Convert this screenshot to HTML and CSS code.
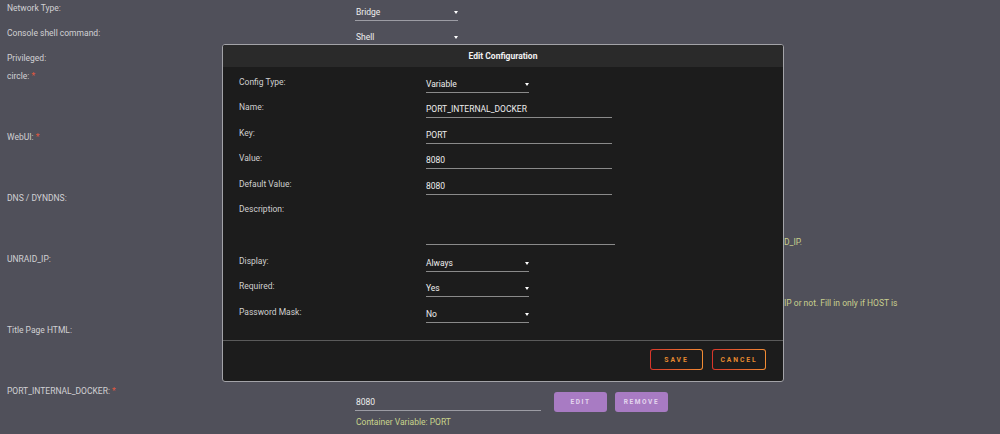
FILE: index.html
```html
<!DOCTYPE html>
<html lang="en">
<head>
    <meta charset="UTF-8">
    <meta name="viewport" content="width=device-width, initial-scale=1.0">
    <title>Edit Configuration</title>
    <link rel="stylesheet" href="styles.css">
</head>
<body>

    <div class="settings">
        <div class="row">
            <div class="label">Network Type:</div>
            <div class="value"><div class="select">Bridge</div></div>
        </div>
        <div class="row">
            <div class="label">Console shell command:</div>
            <div class="value"><div class="select">Shell</div></div>
        </div>
        <div class="row short">
            <div class="label">Privileged:</div>
        </div>
        <div class="row tall">
            <div class="label">circle: <span class="req">*</span></div>
        </div>
        <div class="row tall">
            <div class="label">WebUI: <span class="req">*</span></div>
        </div>
        <div class="row tall">
            <div class="label">DNS / DYNDNS:</div>
            <div class="value"><p class="note">D_IP.</p></div>
        </div>
        <div class="row taller">
            <div class="label">UNRAID_IP:</div>
            <div class="value"><p class="note">IP or not. Fill in only if HOST is</p></div>
        </div>
        <div class="row tall">
            <div class="label">Title Page HTML:</div>
        </div>
        <div class="row port-row">
            <div class="label">PORT_INTERNAL_DOCKER: <span class="req">*</span></div>
            <div class="value">
                <div class="port-line">
                    <div class="input port-input">8080</div>
                    <button class="btn-purple">Edit</button>
                    <button class="btn-purple">Remove</button>
                </div>
                <p class="container-var">Container Variable: PORT</p>
            </div>
        </div>
    </div>

    <!-- Edit configuration dialog -->
    <div class="modal">
        <div class="modal-header">Edit Configuration</div>
        <div class="modal-body">
            <div class="field">
                <div class="field-label">Config Type:</div>
                <div class="select">Variable</div>
            </div>
            <div class="field">
                <div class="field-label">Name:</div>
                <div class="input">PORT_INTERNAL_DOCKER</div>
            </div>
            <div class="field">
                <div class="field-label">Key:</div>
                <div class="input">PORT</div>
            </div>
            <div class="field">
                <div class="field-label">Value:</div>
                <div class="input">8080</div>
            </div>
            <div class="field">
                <div class="field-label">Default Value:</div>
                <div class="input">8080</div>
            </div>
            <div class="field desc">
                <div class="field-label">Description:</div>
                <div class="input textarea"></div>
            </div>
            <div class="field">
                <div class="field-label">Display:</div>
                <div class="select">Always</div>
            </div>
            <div class="field">
                <div class="field-label">Required:</div>
                <div class="select">Yes</div>
            </div>
            <div class="field">
                <div class="field-label">Password Mask:</div>
                <div class="select">No</div>
            </div>
        </div>
        <div class="modal-footer">
            <button class="btn-orange">Save</button>
            <button class="btn-orange">Cancel</button>
        </div>
    </div>

</body>
</html>
```

FILE: styles.css
```css
body { margin: 0; padding: 2px 0 0; background-color: #50505a; color: #d0d0d4; font-family: Roboto, "Open Sans", sans-serif; font-size: 8.5px; overflow: hidden; }
p { margin: 0; }

.settings { width: 100%; }
.row { display: flex; align-items: flex-start; height: 25px; }
.row.short { height: 18px; }
.row.tall { height: 61px; }
.row.taller { height: 71px; }
.row.port-row { height: 49px; }
.label { width: 348px; padding-left: 7px; line-height: 12px; }
.req { color: #e2583e; }
.value { flex: 1; display: flex; flex-direction: column; align-items: flex-start; }

.select, .input { position: relative; line-height: 12px; padding-bottom: 2px; border-bottom: 1px solid #9c9ca4; color: #eeeeee; }
.value .select { width: 102px; margin-top: 4px; padding-left: 1px; }
.select::after { content: ""; position: absolute; right: 0; top: 5px; border-left: 2.5px solid transparent; border-right: 2.5px solid transparent; border-top: 3px solid #ffffff; }

.note { margin-left: 429px; margin-top: 44px; line-height: 12px; color: #c8cf8e; white-space: nowrap; }

.port-line { display: flex; align-items: flex-start; }
.port-input { width: 185px; margin-top: 11px; padding-left: 1px; }
.btn-purple { margin-top: 7px; margin-left: 13px; width: 53px; height: 20px; border: none; border-radius: 3px; background-color: #a87bc3; color: #e4d6ee; font-family: Roboto, sans-serif; font-size: 6.5px; font-weight: bold; letter-spacing: 1.6px; text-transform: uppercase; padding: 0; }
.btn-purple + .btn-purple { margin-left: 8px; }
.container-var { margin-top: 4px; padding-left: 1px; line-height: 12px; color: #c8d48c; }

.modal { position: absolute; left: 222px; top: 44px; width: 560px; height: 336px; border: 1px solid #a3a3a8; border-radius: 3px; background-color: #1c1c1c; display: flex; flex-direction: column; }
.modal-header { height: 22px; line-height: 23px; background-color: #2a2a2a; text-align: center; color: #f2f2f2; font-weight: bold; font-size: 8.5px; border-radius: 2px 2px 0 0; }
.modal-body { flex: 1; padding: 8px 16px 0; color: #cfcfcf; }
.field { display: flex; align-items: flex-start; height: 25.4px; }
.field.desc { height: 52px; }
.field-label { width: 187px; line-height: 12px; padding-top: 1px; }
.field .select { width: 103px; margin-top: 3px; border-bottom-color: #8a8a8a; }
.field .input { width: 186px; margin-top: 3px; border-bottom-color: #8a8a8a; }
.field .textarea { width: 189px; height: 40px; margin-top: 0; }

.modal-footer { height: 40px; border-top: 1px solid #5a5a5a; display: flex; justify-content: flex-end; align-items: flex-start; padding-right: 17px; gap: 9px; }
.btn-orange { margin-top: 8px; width: 53px; height: 21px; border: 1px solid transparent; border-radius: 3px; background: linear-gradient(#1c1c1c, #1c1c1c) padding-box, linear-gradient(90deg, #d8362a, #f28c34) border-box; color: #e68a30; font-family: Roboto, sans-serif; font-size: 6.8px; font-weight: bold; letter-spacing: 1.9px; text-transform: uppercase; padding: 0; }
.btn-orange + .btn-orange { width: 54px; }
```
